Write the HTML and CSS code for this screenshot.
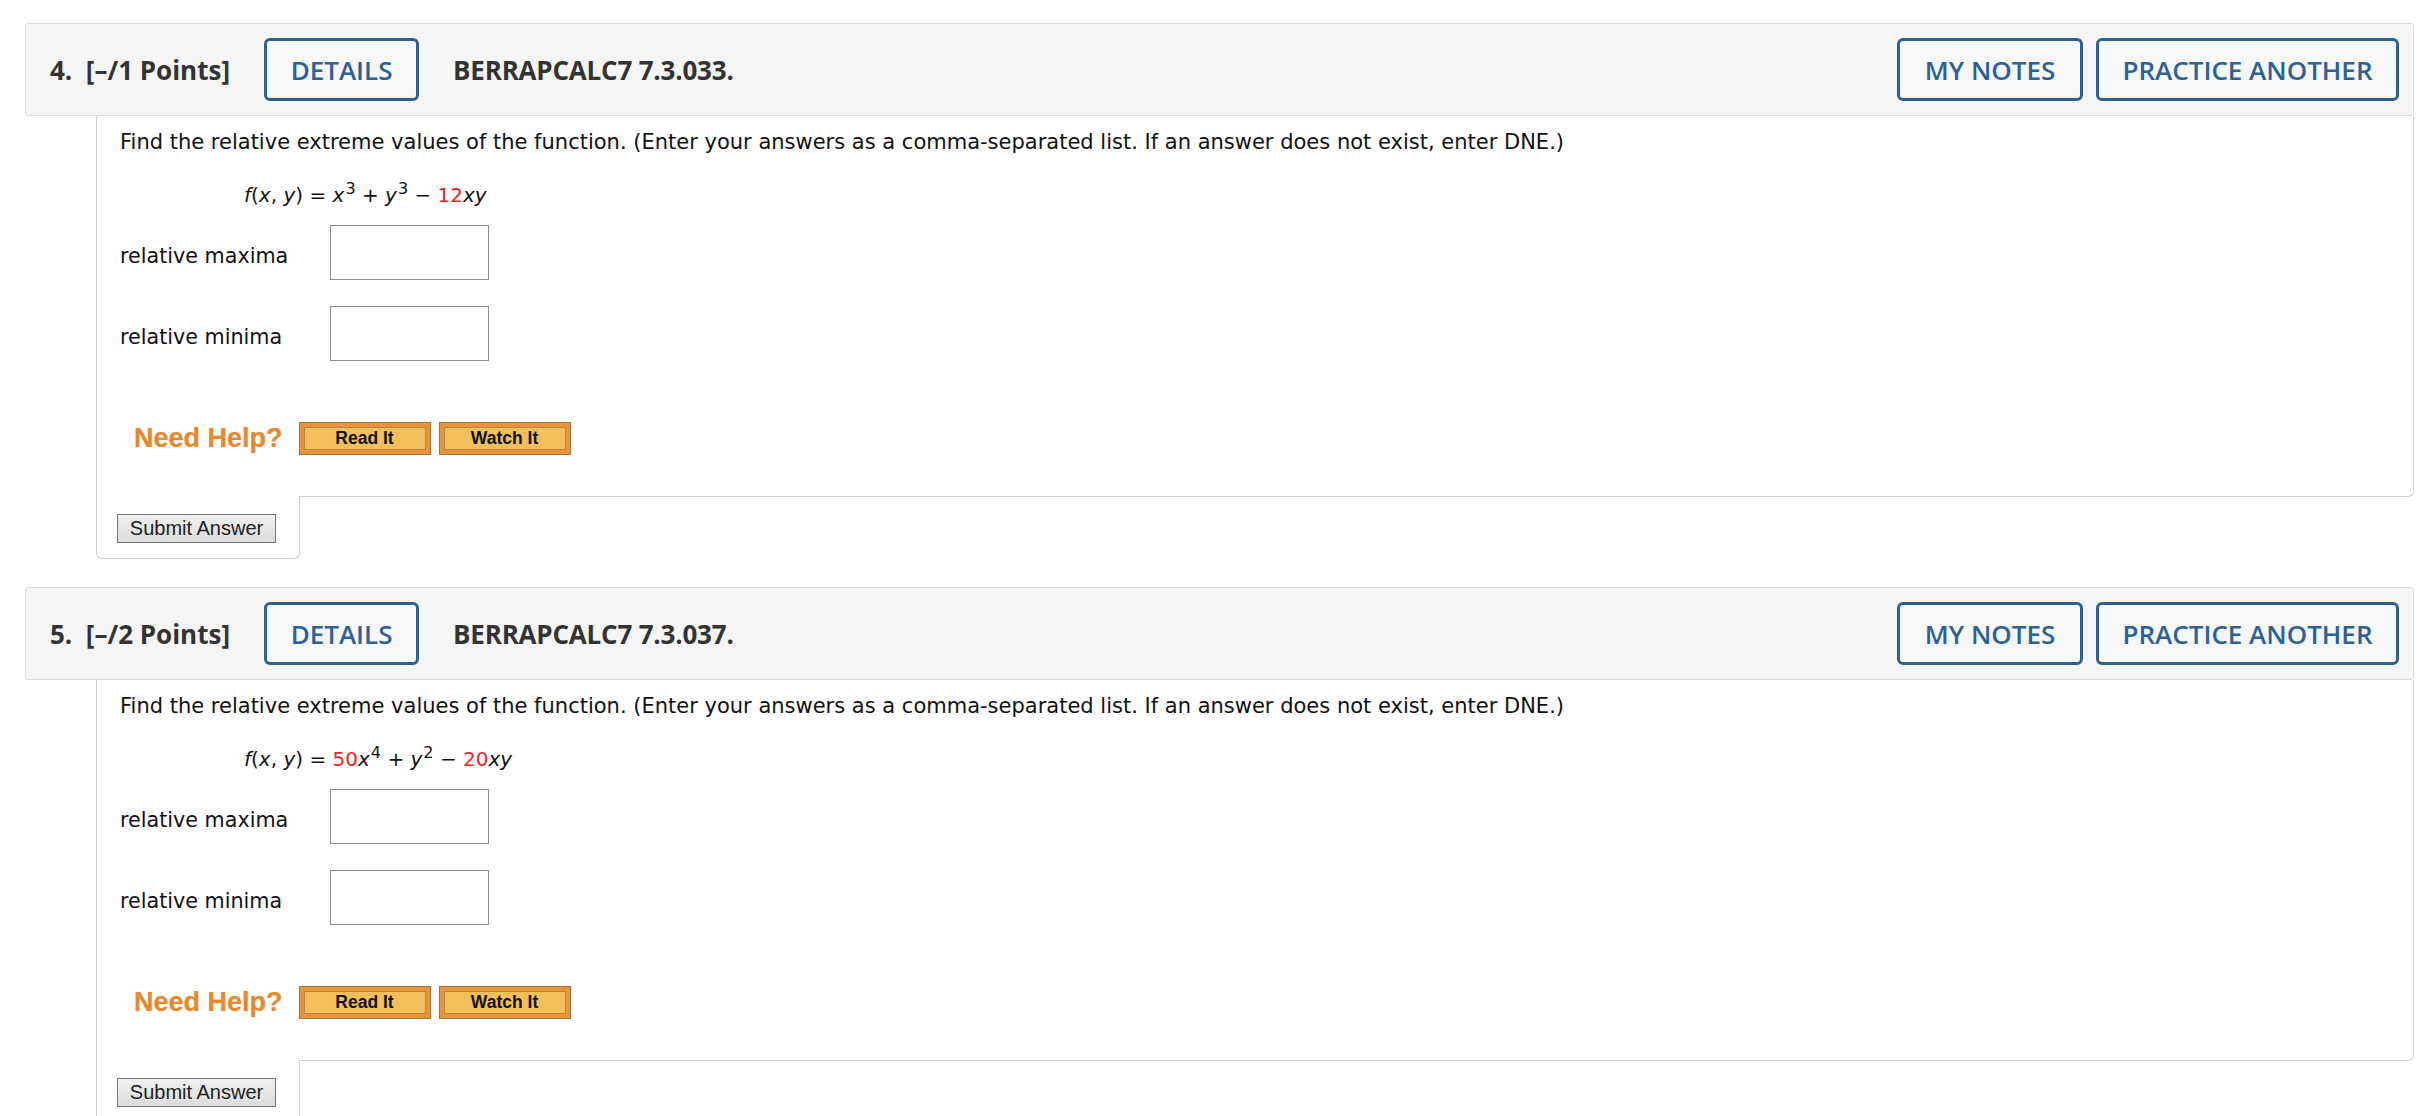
FILE: index.html
```html
<!DOCTYPE html>
<html>
<head>
<meta charset="utf-8">
<title>Questions</title>
<link rel="stylesheet" href="styles.css">
</head>
<body>
<div class="page">
  <section class="q">
    <header class="q-head">
      <span class="q-num">4.&nbsp; [–/1 Points]</span>
      <span class="btn btn-details">DETAILS</span>
      <span class="q-code">BERRAPCALC7 7.3.033.</span>
      <span class="spacer"></span>
      <span class="btn btn-notes">MY NOTES</span>
      <span class="btn btn-practice">PRACTICE ANOTHER</span>
    </header>
    <div class="q-body">
      <p class="prompt">Find the relative extreme values of the function. (Enter your answers as a comma-separated list. If an answer does not exist, enter DNE.)</p>
      <p class="formula"><i>f</i>(<i>x</i>, <i>y</i>) = <i>x</i><sup>3</sup> + <i>y</i><sup>3</sup> − <span class="red">12</span><i>xy</i></p>
      <div class="row"><span class="label">relative maxima</span><span class="box"></span></div>
      <div class="row row-min"><span class="label">relative minima</span><span class="box"></span></div>
      <div class="help">
        <span class="need">Need Help?</span>
        <span class="hbtn"><span class="hbtn-in">Read It</span></span>
        <span class="hbtn"><span class="hbtn-in">Watch It</span></span>
      </div>
    </div>
    <div class="tab"><span class="submit">Submit Answer</span></div>
  </section>

  <section class="q">
    <header class="q-head">
      <span class="q-num">5.&nbsp; [–/2 Points]</span>
      <span class="btn btn-details">DETAILS</span>
      <span class="q-code">BERRAPCALC7 7.3.037.</span>
      <span class="spacer"></span>
      <span class="btn btn-notes">MY NOTES</span>
      <span class="btn btn-practice">PRACTICE ANOTHER</span>
    </header>
    <div class="q-body">
      <p class="prompt">Find the relative extreme values of the function. (Enter your answers as a comma-separated list. If an answer does not exist, enter DNE.)</p>
      <p class="formula"><i>f</i>(<i>x</i>, <i>y</i>) = <span class="red">50</span><i>x</i><sup>4</sup> + <i>y</i><sup>2</sup> − <span class="red">20</span><i>xy</i></p>
      <div class="row"><span class="label">relative maxima</span><span class="box"></span></div>
      <div class="row row-min"><span class="label">relative minima</span><span class="box"></span></div>
      <div class="help">
        <span class="need">Need Help?</span>
        <span class="hbtn"><span class="hbtn-in">Read It</span></span>
        <span class="hbtn"><span class="hbtn-in">Watch It</span></span>
      </div>
    </div>
    <div class="tab"><span class="submit">Submit Answer</span></div>
  </section>
</div>
</body>
</html>
```
FILE: styles.css
```css
html, body {
  margin: 0;
  padding: 0;
  background: #ffffff;
}
.page {
  padding: 23px 20px 0 25px;
}
.q {
  margin-bottom: 28px;
}
.q-head {
  display: flex;
  align-items: center;
  height: 93px;
  box-sizing: border-box;
  padding: 0 14px 0 24px;
  background: #f5f5f5;
  border: 1px solid #dcdcdc;
  border-radius: 3px;
  font-family: "Open Sans", "DejaVu Sans", sans-serif;
  font-size: 26px;
}
.q-num {
  font-weight: 700;
  color: #333333;
  white-space: pre;
}
.q-code {
  font-weight: 700;
  color: #333333;
  margin-left: 34px;
  letter-spacing: -0.2px;
}
.spacer {
  flex: 1;
}
.btn {
  display: flex;
  align-items: center;
  justify-content: center;
  height: 63px;
  box-sizing: border-box;
  border: 3px solid #2c6194;
  border-radius: 6px;
  color: #2c6194;
  font-weight: 600;
  background: #f7f7f7;
}
.btn-details {
  width: 155px;
  margin-left: 34px;
}
.btn-notes {
  width: 186px;
}
.btn-practice {
  width: 303px;
  margin-left: 13px;
}
.q-body {
  margin-left: 71px;
  border-left: 1px solid #cfcfcf;
  border-right: 1px solid #cfcfcf;
  border-bottom: 1px solid #cfcfcf;
  border-bottom-right-radius: 6px;
  padding: 13px 24px 41px 23px;
  font-family: "DejaVu Sans", Verdana, sans-serif;
  font-size: 20px;
  color: #111111;
}
.prompt {
  margin: 0;
  line-height: 26px;
  font-size: 21px;
}
.formula {
  margin: 27px 0 0 124px;
  line-height: 26px;
}
.formula sup {
  font-size: 0.8em;
  line-height: 0;
  vertical-align: 0.5em;
  margin-left: 1px;
}
.red {
  color: #e8281e;
}
.row {
  display: flex;
  align-items: center;
  margin-top: 17px;
}
.row-min {
  margin-top: 26px;
}
.label {
  width: 210px;
  padding-top: 7px;
  font-size: 20.7px;
}
.box {
  display: block;
  width: 159px;
  height: 55px;
  box-sizing: border-box;
  border: 1px solid #8c8c8c;
  background: #ffffff;
}
.help {
  display: flex;
  align-items: center;
  margin-top: 61px;
  padding-left: 14px;
}
.need {
  font-family: "Liberation Sans", Arial, sans-serif;
  font-weight: 700;
  font-size: 27px;
  color: #e58a32;
  text-shadow: 0 0 1px rgba(229, 138, 50, 0.6);
  margin-right: 16px;
}
.hbtn {
  display: block;
  width: 132px;
  height: 33px;
  box-sizing: border-box;
  padding: 4px;
  border: 1px solid #a3743d;
  background: #e8943b;
  margin-right: 8px;
}
.hbtn-in {
  display: block;
  height: 23px;
  box-sizing: border-box;
  border: 1px solid #b7863f;
  background: #f2bf5a;
  font-family: "Liberation Sans", Arial, sans-serif;
  font-weight: 700;
  font-size: 17.5px;
  line-height: 21px;
  text-align: center;
  color: #111111;
}
.tab {
  width: 204px;
  box-sizing: border-box;
  margin-left: 71px;
  margin-top: -1px;
  background: #ffffff;
  border-left: 1px solid #cfcfcf;
  border-right: 1px solid #cfcfcf;
  border-bottom: 1px solid #cfcfcf;
  border-radius: 0 0 6px 6px;
  padding: 18px 0 15px 20px;
}
.submit {
  display: block;
  width: 159px;
  height: 29px;
  box-sizing: border-box;
  border: 1px solid #777777;
  background: linear-gradient(#f0f0f0, #dcdcdc);
  font-family: "Liberation Sans", Arial, sans-serif;
  font-size: 20px;
  line-height: 27px;
  text-align: center;
  color: #222222;
}
```
